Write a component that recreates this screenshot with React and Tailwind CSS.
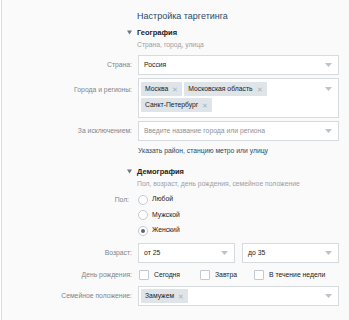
import React from 'react';

const font = { fontFamily: '"Liberation Sans", Arial, sans-serif' };

function Arrow() {
  return (
    <svg width="7" height="4" viewBox="0 0 7 4" className="shrink-0">
      <path d="M0 0h7L3.5 4z" fill="#bcc3ca" />
    </svg>
  );
}

function Tri() {
  return (
    <svg width="5" height="5" viewBox="0 0 6 5" className="absolute left-[-10px] top-[3px]">
      <path d="M0 0h6L3 5z" fill="#6b7785" />
    </svg>
  );
}

function Chip({ children }) {
  return (
    <span className="inline-flex items-center h-[14px] pl-[4px] pr-[4px] gap-[4px] bg-[#dfe4e8] text-[#222] text-[6.8px] rounded-[1px]">
      {children}
      <span className="text-[#a9b2ba] text-[7px] leading-none">✕</span>
    </span>
  );
}

function Select({ children, className = '', muted }) {
  return (
    <div className={`h-[20px] bg-white border border-[#d6dbe0] flex items-center justify-between pl-[5px] pr-[6px] ${className}`}>
      <span className={`text-[6.8px] ${muted ? 'text-[#8a9199]' : 'text-[#222]'}`}>{children}</span>
      <Arrow />
    </div>
  );
}

function Radio({ checked, children }) {
  return (
    <div className="flex items-center h-[15px] gap-[4px]">
      <span className="w-[10px] h-[10px] rounded-full border border-[#c5cbd2] bg-white flex items-center justify-center">
        {checked && <span className="w-[4px] h-[4px] rounded-full bg-[#5b6670]" />}
      </span>
      <span className="text-[6.8px] text-[#222]">{children}</span>
    </div>
  );
}

function Check({ children, className = '' }) {
  return (
    <div className={`flex items-center gap-[5px] ${className}`}>
      <span className="w-[10px] h-[10px] border border-[#c5cbd2] bg-white rounded-[1px]" />
      <span className="text-[6.8px] text-[#222]">{children}</span>
    </div>
  );
}

function Row({ label, children, className = '', labelClass = '' }) {
  return (
    <div className={`flex ${className}`}>
      <div className={`w-[130px] shrink-0 text-right text-[6.8px] text-[#7d858d] ${labelClass}`}>{label}</div>
      <div className="ml-[6px] w-[201px]">{children}</div>
    </div>
  );
}

export default function App() {
  return (
    <div style={font} className="w-[348px] h-[320px] ml-[1px] bg-[#fafafa] border-l border-[#dedede] overflow-hidden">
      <div className="pl-[135px] pt-[10px]">
        <div className="text-[9px] text-[#2b4a66] leading-[12px]">Настройка таргетинга</div>
        <div className="relative mt-[5px]">
          <Tri />
          <div className="text-[7.5px] text-[#222] font-bold leading-[12px]">География</div>
          <div className="text-[6.8px] text-[#9aa1a8] leading-[10px] mt-[1px]">Страна, город, улица</div>
        </div>
      </div>

      <div className="mt-[5px] flex flex-col">
        <Row label="Страна:" labelClass="leading-[20px]">
          <Select>Россия</Select>
        </Row>
        <Row label="Города и регионы:" className="mt-[3px]" labelClass="leading-[24px]">
          <div className="h-[40px] bg-white border border-[#d6dbe0] flex pl-[2px] pt-[3px] pr-[6px]">
            <div className="flex flex-wrap gap-x-[2px] gap-y-[2px] flex-1 content-start">
              <Chip>Москва</Chip>
              <Chip>Московская область</Chip>
              <Chip>Санкт-Петербург</Chip>
            </div>
            <div className="pt-[5px]"><Arrow /></div>
          </div>
        </Row>
        <Row label="За исключением:" className="mt-[3px]" labelClass="leading-[20px]">
          <Select muted>Введите название города или региона</Select>
        </Row>
        <Row label="" className="mt-[4px]">
          <div className="text-[6.8px] text-[#2b4a66] leading-[12px]">Указать район, станцию метро или улицу</div>
        </Row>
      </div>

      <div className="pl-[135px] mt-[9px]">
        <div className="relative">
          <Tri />
          <div className="text-[7.5px] text-[#222] font-bold leading-[12px]">Демография</div>
          <div className="text-[6.8px] text-[#9aa1a8] leading-[10px] mt-[1px]">Пол, возраст, день рождения, семейное положение</div>
        </div>
      </div>

      <div className="mt-[3px] flex flex-col">
        <Row label="Пол:" labelClass="leading-[15px] pr-[3px]">
          <div className="flex flex-col gap-[0.5px]">
            <Radio>Любой</Radio>
            <Radio>Мужской</Radio>
            <Radio checked>Женский</Radio>
          </div>
        </Row>
        <Row label="Возраст:" className="mt-[5px]" labelClass="leading-[20px]">
          <div className="flex gap-[7px]">
            <Select className="w-[97px]">от 25</Select>
            <Select className="w-[97px]">до 35</Select>
          </div>
        </Row>
        <Row label="День рождения:" className="mt-[4px]" labelClass="leading-[16px]">
          <div className="flex items-center h-[16px] pl-[1px]">
            <Check className="w-[61px]">Сегодня</Check>
            <Check className="w-[54px]">Завтра</Check>
            <Check>В течение недели</Check>
          </div>
        </Row>
        <Row label="Семейное положение:" className="mt-[3px]" labelClass="leading-[20px]">
          <div className="h-[20px] bg-white border border-[#d6dbe0] flex items-center justify-between pl-[2px] pr-[6px]">
            <Chip>Замужем</Chip>
            <Arrow />
          </div>
        </Row>
      </div>
    </div>
  );
}
